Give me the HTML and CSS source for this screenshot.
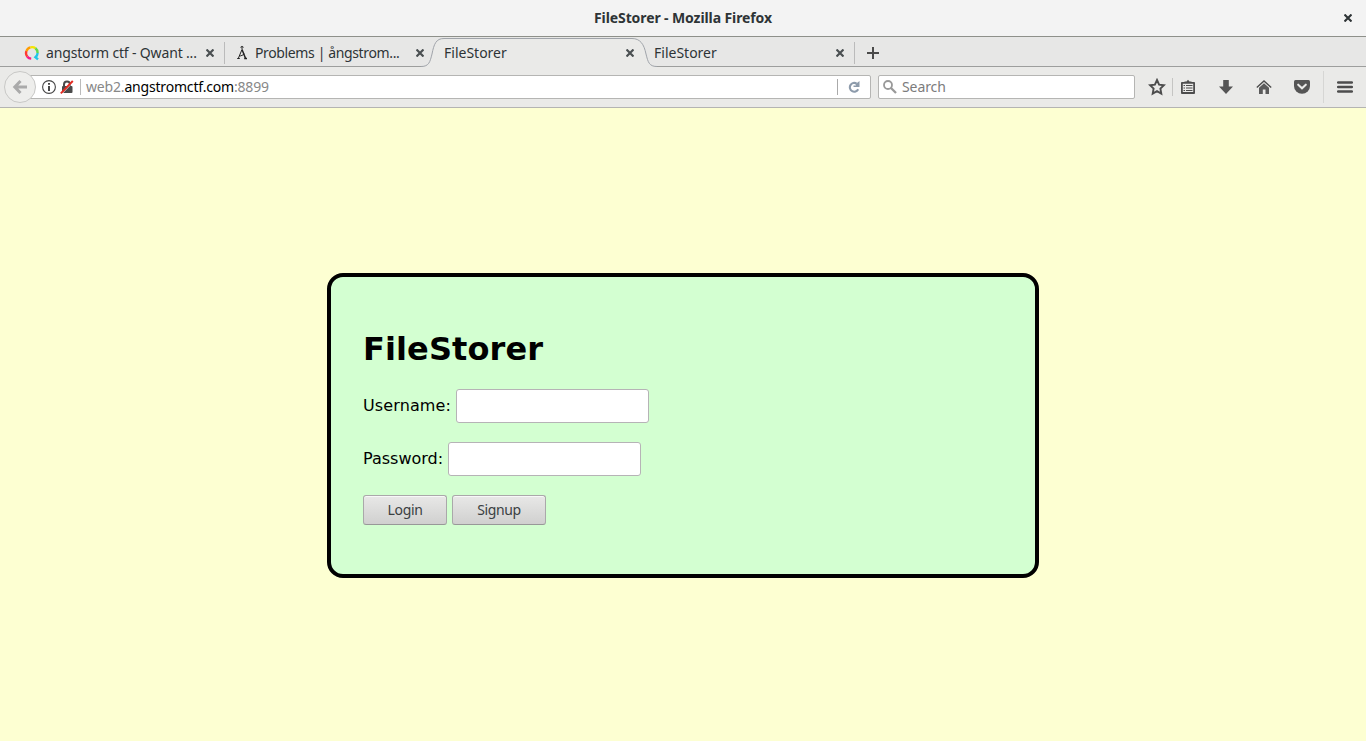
FILE: index.html
```html
<!DOCTYPE html>
<html lang="en">
<head>
<meta charset="utf-8">
<title>FileStorer</title>
<link rel="stylesheet" href="styles.css">
</head>
<body>
<header class="titlebar">
  <span class="window-title">FileStorer - Mozilla Firefox</span>
  <svg class="window-close" width="8" height="8" viewBox="0 0 8 8"><path d="M.5 .5L7.5 7.5M7.5 .5L.5 7.5" stroke="#2e3436" stroke-width="2.1"/></svg>
</header>
<nav class="tabs">
  <div class="tab divided">
    <svg class="favicon" width="16" height="16" viewBox="0 0 16 16" fill="none" stroke-width="2.4">
      <path d="M3.2 11.6A5.7 5.7 0 0 1 2.5 6" stroke="#ff3b30"/>
      <path d="M2.5 6A5.7 5.7 0 0 1 6.5 2.4" stroke="#ff9d00"/>
      <path d="M6.5 2.4A5.7 5.7 0 0 1 11.5 3.3" stroke="#f5e400"/>
      <path d="M11.5 3.3A5.7 5.7 0 0 1 13.6 8" stroke="#62d84e"/>
      <path d="M13.6 8A5.7 5.7 0 0 1 11.5 12.2L14 14.3" stroke="#20c6e8"/>
      <path d="M3.2 11.6A5.7 5.7 0 0 0 7.2 13.6" stroke="#f51b8a"/>
    </svg>
    <span class="label t-qwant">angstorm ctf - Qwant ...</span>
    <svg class="close" width="8" height="8" viewBox="0 0 8 8"><path d="M.5 .5L7.5 7.5M7.5 .5L.5 7.5"/></svg>
  </div>
  <div class="tab">
    <svg class="favicon" width="16" height="16" viewBox="0 0 16 16" fill="none" stroke="#222">
      <circle cx="8" cy="2.3" r="1" stroke-width="1"/><path d="M8 4.5L4.4 13.2M3.2 13.5h2.6" stroke-width="1"/><path d="M8 4.5L11.5 13.2M10.2 13.5h2.8" stroke-width="1.5"/><path d="M5.5 11C7 11 9 10 10.3 9" stroke-width="1"/>
    </svg>
    <span class="label t-problems">Problems | ångstrom...</span>
    <svg class="close" width="8" height="8" viewBox="0 0 8 8"><path d="M.5 .5L7.5 7.5M7.5 .5L.5 7.5"/></svg>
  </div>
  <div class="tab active">
    <svg class="tab-shape" width="236" height="30" viewBox="0 0 236 30">
      <path d="M0 30V29.5C8 29.5 9 25 11 17C13 7 15 1.5 23 1.5H211C219 1.5 223 7 225 17C227 25 228 29.5 236 29.5V30Z" fill="#eaeae8"/>
      <path d="M0 29.5C8 29.5 9 25 11 17C13 7 15 1.5 23 1.5H211C219 1.5 223 7 225 17C227 25 228 29.5 236 29.5" fill="none" stroke="#a0a4aa"/>
    </svg>
    <span class="label t-file">FileStorer</span>
    <svg class="close" width="8" height="8" viewBox="0 0 8 8"><path d="M.5 .5L7.5 7.5M7.5 .5L.5 7.5"/></svg>
  </div>
  <div class="tab divided">
    <span class="label t-file">FileStorer</span>
    <svg class="close" width="8" height="8" viewBox="0 0 8 8"><path d="M.5 .5L7.5 7.5M7.5 .5L.5 7.5"/></svg>
  </div>
  <svg class="new-tab" width="12" height="12" viewBox="0 0 12 12"><path d="M6 0V12M0 6H12" stroke="#4a4a4a" stroke-width="2"/></svg>
</nav>
<div class="toolbar">
  <div class="back">
    <svg width="16" height="16" viewBox="0 0 16 16"><path d="M8.5 2L2.8 8L8.5 14M3 8H15" fill="none" stroke="#aaa" stroke-width="3"/></svg>
  </div>
  <div class="urlbar">
    <svg class="info" width="14" height="14" viewBox="0 0 14 14"><circle cx="7" cy="7" r="6.4" fill="none" stroke="#444" stroke-width="1.1"/><path d="M7 6V11M7 3V4.8" stroke="#333" stroke-width="1.8"/></svg>
    <svg class="lock" width="14" height="14" viewBox="0 0 14 14"><path d="M4 7V4.5A3 3 0 0 1 10 4.5V7" fill="none" stroke="#4a4a4a" stroke-width="2"/><rect x="2" y="6" width="10.5" height="7" rx="1" fill="#4a4a4a"/><path d="M1.6 14L13.6 1.7" stroke="#fff" stroke-width="1"/><path d="M.8 13.3L12.8 1" stroke="#e32b22" stroke-width="1.9"/></svg>
    <span class="url">web2.<b>angstromctf.com</b>:8899</span>
    <span class="reload"><svg width="12" height="12" viewBox="0 0 12 12"><path d="M10.2 8.3A4.4 4.4 0 1 1 8.6 2.6" fill="none" stroke="#8d9bab" stroke-width="2.1"/><path d="M11.5 0V6H5.5V4.6H8L7.6 3Z" fill="#8d9bab"/></svg></span>
  </div>
  <div class="search">
    <svg width="14" height="14" viewBox="0 0 14 14" fill="none" stroke="#999"><circle cx="5" cy="5" r="4" stroke-width="1.8"/><path d="M8 8L13 13" stroke-width="2.3"/></svg>
    <span>Search</span>
  </div>
  <div class="tools">
    <div class="tool star"><svg width="18" height="18" viewBox="0 0 18 18"><path d="M9 2L11.1 6.6L16 7.2L12.4 10.6L13.3 15.6L9 13.1L4.7 15.6L5.6 10.6L2 7.2L6.9 6.6Z" fill="none" stroke="#4d4d4d" stroke-width="1.9"/></svg></div>
    <div class="tool"><svg width="16" height="16" viewBox="0 0 16 16"><path d="M1.9 3.8H14.1V14H1.9Z" fill="none" stroke="#4d4d4d" stroke-width="1.8" stroke-linejoin="round"/><path d="M4.5 4V2.5H6.5L8 .7L9.5 2.5H11.5V4Z" fill="#4d4d4d"/><path d="M3.5 6.5H5M6 6.5H12.5M3.5 9H5M6 9H12.5M3.5 11.5H5M6 11.5H12.5" stroke="#4d4d4d" stroke-width="1.2"/></svg></div>
    <div class="tool"><svg width="16" height="16" viewBox="0 0 16 16"><path d="M5.2 1H10.8V7.5H15L8 15L1 7.5H5.2Z" fill="#555"/></svg></div>
    <div class="tool"><svg width="16" height="16" viewBox="0 0 16 16"><path d="M.8 8.6L8 1.9L15.2 8.6" fill="none" stroke="#4d4d4d" stroke-width="1.4"/><path d="M3 8.7L8 4.2L13 8.7V15H9.5V10.5H6.8V15H3Z" fill="#5b5b5b"/></svg></div>
    <div class="tool"><svg width="16" height="16" viewBox="0 0 16 16"><path d="M0 2.5Q0 1 1.5 1H14.5Q16 1 16 2.5V7A8 7.8 0 0 1 0 7Z" fill="#555"/><path d="M4.2 5.7L8 9.2L11.8 5.7" fill="none" stroke="#eaeae8" stroke-width="2.1" stroke-linecap="round"/></svg></div>
    <div class="tool menu"><svg width="16" height="14" viewBox="0 0 16 14"><path d="M1.2 2.5H14.8M1.2 7H14.8M1.2 11.5H14.8" stroke="#4d4d4d" stroke-width="2.5" stroke-linecap="round"/></svg></div>
  </div>
</div>
<main class="page">
  <form class="card">
    <h1>FileStorer</h1>
    <label class="row user"><span>Username:</span><input type="text"></label>
    <label class="row"><span>Password:</span><input type="password"></label>
    <div class="buttons"><button type="button" class="login">Login</button><button type="button" class="signup">Signup</button></div>
  </form>
</main>
</body>
</html>
```
FILE: styles.css
```css
* { box-sizing: border-box; }
body { margin: 0; height: 741px; overflow: hidden; display: flex; flex-direction: column; font: 14px/20px "Noto Sans", sans-serif; color: #2e3436; }
svg { display: block; flex: none; }
.titlebar { height: 37px; flex: none; display: grid; grid-template-columns: 1fr auto 1fr; align-items: center; background: #f3f3f3; border-bottom: 1px solid #8e908a; padding: 0 14px; }
.window-title { grid-column: 2; font-weight: 700; letter-spacing: -.1px; white-space: nowrap; }
.window-close { justify-self: end; }
.tabs { height: 30px; flex: none; display: flex; align-items: center; padding-left: 15px; background: #e7e7e6; border-bottom: 1px solid #9d9e9d; }
.tab { position: relative; width: 210px; height: 29px; flex: none; display: flex; align-items: center; padding: 3px 11px 0 9px; }
.divided::after { content: ""; position: absolute; right: 0; top: 5px; height: 22px; width: 1px; background: #bbb; }
.favicon { margin-right: 5px; }
.label { position: relative; white-space: nowrap; }
.close { margin-left: auto; position: relative; }
.close path { stroke: #4b5052; stroke-width: 2.2; }
.tab-shape { position: absolute; left: -14px; top: 0; }
.t-qwant { letter-spacing: -.16px; padding-left: 1px; }
.t-problems { letter-spacing: -.37px; }
.t-file { letter-spacing: 0; }
.new-tab { margin: 3px 0 0 12px; }
.toolbar { height: 41px; flex: none; display: flex; align-items: center; background: #eaeae8; border-bottom: 1px solid #b4b4b2; padding-left: 4px; }
.back { width: 32px; height: 32px; flex: none; border: 1px solid #c8c8c6; border-radius: 50%; background: #eeeeec; display: flex; align-items: center; justify-content: center; z-index: 1; }
.urlbar { width: 843px; height: 24px; margin-left: -8px; flex: none; display: flex; align-items: center; background: #fff; border: 1px solid #b5b5b3; border-radius: 2px; padding-left: 13px; }
.lock { margin-left: 4px; }
.url { margin-left: 6px; padding-left: 5px; border-left: 1px solid #bbb; line-height: 16px; color: #888; letter-spacing: -.18px; }
.url b { font-weight: 400; color: #000; }
.reload { margin-left: auto; width: 33px; height: 16px; border-left: 1px solid #aaa; display: flex; align-items: center; justify-content: center; }
.search { width: 257px; height: 24px; margin-left: 7px; flex: none; display: flex; align-items: center; gap: 5px; padding-left: 4px; background: #fff; border: 1px solid #b5b5b3; border-radius: 2px; color: #7c7c7c; letter-spacing: -.1px; }
.tools { flex: 1; height: 34px; display: flex; align-items: center; padding-left: 7px; }
.tool { width: 38px; flex: none; display: flex; justify-content: center; }
.star { width: 31px; height: 18px; border-right: 1px solid #c5c5c3; }
.tool:nth-child(2) { width: 30px; }
.tool:nth-child(3) { width: 46px; }
.tool:nth-child(4) { width: 30px; }
.tool:nth-child(5) { width: 46px; }
.menu { width: 42px; height: 32px; margin-left: -2px; align-items: center; border-left: 1px solid #d6d6d4; }
.page { flex: 1; background: #fdffd2; padding-top: 165px; font-family: "DejaVu Sans", sans-serif; color: #000; }
.card { width: 712px; height: 305px; margin: 0 auto; background: #d3ffd1; border: 4px solid #000; border-radius: 16px; padding: 53px 32px 0; display: flex; flex-direction: column; align-items: flex-start; }
h1 { margin: 0 0 21px; font-size: 32px; line-height: 38px; letter-spacing: .1px; }
.row { height: 34px; margin-bottom: 19px; display: flex; align-items: center; gap: 5px; font-size: 16px; line-height: 19px; }
.row span { padding-bottom: 2px; }
.user { letter-spacing: .11px; }
input { width: 193px; height: 34px; background: #fff; border: 1px solid #b6b3b6; border-radius: 3px; padding: 0 8px; }
.buttons { display: flex; gap: 5px; }
button { height: 30px; padding: 0; border: 1px solid #aaa8aa; border-bottom-color: #989898; border-radius: 3px; background: linear-gradient(#e8e8e7, #d0d0cf); box-shadow: inset 0 1px #f8f8f8; font: 14px/20px "Noto Sans", sans-serif; letter-spacing: -.35px; color: #3a4042; }
.login { width: 84px; }
.signup { width: 94px; }
```
